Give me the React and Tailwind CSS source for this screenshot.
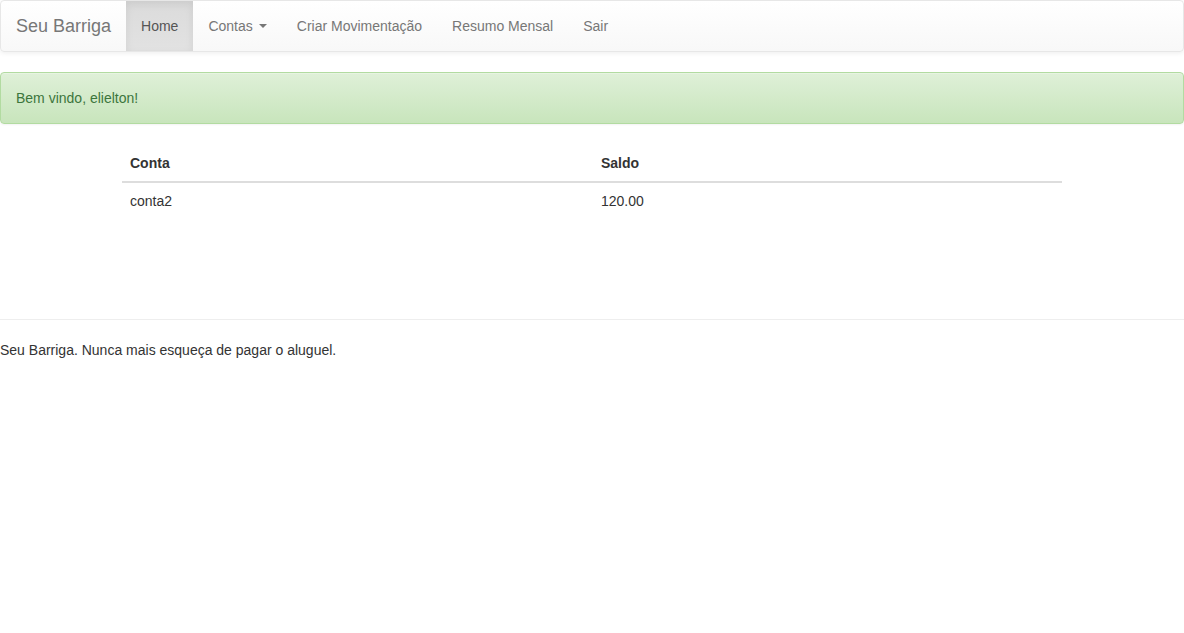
export default function App() {
  const font = { fontFamily: '"Liberation Sans", Arial, sans-serif' };
  return (
    <div className="bg-white text-[14px] leading-[20px] text-[#333]" style={font}>
      <nav className="mb-[20px] flex h-[52px] rounded-[4px] border border-[#e7e7e7] bg-gradient-to-b from-white to-[#f8f8f8] shadow-[inset_0_1px_0_rgba(255,255,255,0.15),0_1px_5px_rgba(0,0,0,0.075)]">
        <a className="block h-[50px] px-[15px] py-[15px] text-[18px] leading-[20px] text-[#777]">Seu Barriga</a>
        <ul className="flex">
          <li>
            <a className="block bg-gradient-to-b from-[#dbdbdb] to-[#e2e2e2] px-[15px] py-[15px] text-[#555] shadow-[inset_0_3px_9px_rgba(0,0,0,0.075)]">Home</a>
          </li>
          <li>
            <a className="flex items-center px-[15px] py-[15px] text-[#777]">
              Contas
              <span className="ml-[6px] inline-block h-0 w-0 border-x-[4px] border-t-[4px] border-x-transparent border-t-[#777]"></span>
            </a>
          </li>
          <li>
            <a className="block px-[15px] py-[15px] text-[#777]">Criar Movimentação</a>
          </li>
          <li>
            <a className="block px-[15px] py-[15px] text-[#777]">Resumo Mensal</a>
          </li>
          <li>
            <a className="block px-[15px] py-[15px] text-[#777]">Sair</a>
          </li>
        </ul>
      </nav>
      <div className="mb-[20px] rounded-[4px] border border-[#b2dba1] bg-gradient-to-b from-[#dff0d8] to-[#c8e5bc] p-[15px] text-[#3c763d] shadow-[inset_0_1px_0_rgba(255,255,255,0.25),0_1px_2px_rgba(0,0,0,0.05)]">
        Bem vindo, elielton!
      </div>
      <div className="mx-auto w-[970px] px-[15px] pt-[1px]">
        <table className="w-full border-collapse">
          <thead>
            <tr>
              <th className="w-[471px] border-b-2 border-[#ddd] p-[8px] text-left font-bold">Conta</th>
              <th className="border-b-2 border-[#ddd] p-[8px] text-left font-bold">Saldo</th>
            </tr>
          </thead>
          <tbody>
            <tr>
              <td className="p-[8px]">conta2</td>
              <td className="p-[8px]">120.00</td>
            </tr>
          </tbody>
        </table>
      </div>
      <footer className="mt-[100px]">
        <hr className="mb-[20px] border-0 border-t border-[#eee]" />
        <span>Seu Barriga. Nunca mais esqueça de pagar o aluguel.</span>
      </footer>
    </div>
  );
}
